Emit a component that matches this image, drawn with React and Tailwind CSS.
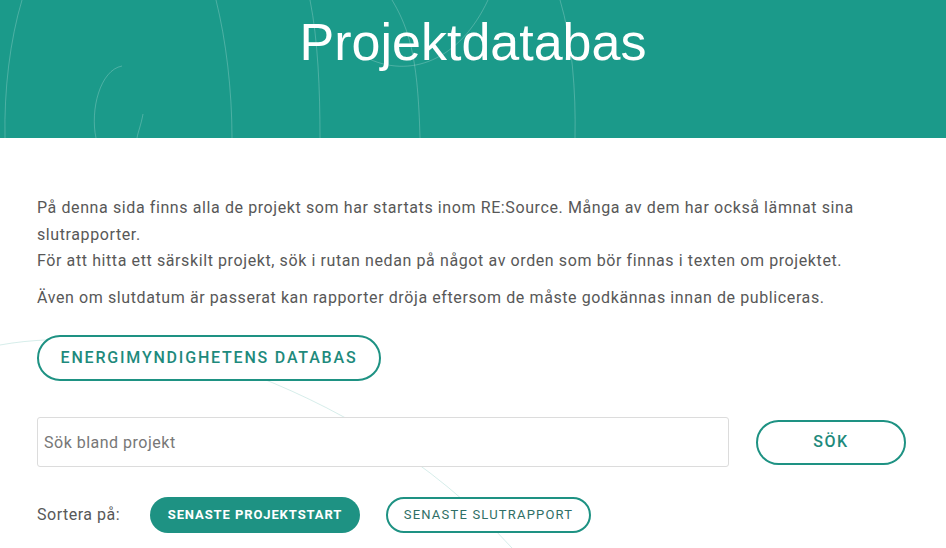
import React from "react";

function HeaderLines() {
  return (
    <svg className="absolute inset-0 w-full h-full pointer-events-none" viewBox="0 0 946 138" preserveAspectRatio="none" fill="none" stroke="#ffffff" strokeOpacity="0.22" strokeWidth="1">
      <path d="M22 0 C10 40 4 90 5 138" />
      <path d="M216 0 C226 40 232 90 232 138" />
      <path d="M310 0 C318 40 320 90 320 138" />
      <path d="M122 66 C100 70 90 110 96 138" />
      <path d="M143 114 C141 125 138 132 137 138" />
      <path d="M392 0 C410 30 418 60 420 138" />
      <path d="M365 57 C410 80 460 60 488 0" />
      <path d="M560 0 C572 40 576 90 575 138" />
    </svg>
  );
}

function BodyLines() {
  return (
    <svg className="absolute inset-0 w-full h-full pointer-events-none" viewBox="0 0 946 410" preserveAspectRatio="none" fill="none" stroke="#1b9a8a" strokeOpacity="0.18" strokeWidth="1">
      <path d="M0 207 C60 196 150 200 240 232 C330 265 430 320 512 410" />
    </svg>
  );
}

export default function App() {
  return (
    <div className="w-[946px] h-[548px] overflow-hidden bg-white" style={{ fontFamily: "Roboto, 'Liberation Sans', sans-serif" }}>
      <header className="relative h-[138px] bg-[#1b9a8a] flex justify-center">
        <HeaderLines />
        <h1 className="relative mt-[10px] text-[52px] leading-[64px] text-white" style={{ fontFamily: "'Liberation Sans', Arial, sans-serif" }}>
          Projektdatabas
        </h1>
      </header>

      <main className="relative px-[37px] pt-[57px] h-[410px]">
        <BodyLines />
        <div className="relative text-[16px] leading-[26.5px] text-[#585858] tracking-[0.6px]">
          <p>
            På denna sida finns alla de projekt som har startats inom RE:Source. Många av dem har också lämnat sina slutrapporter.
            <br />
            För att hitta ett särskilt projekt, sök i rutan nedan på något av orden som bör finnas i texten om projektet.
          </p>
          <p className="mt-[10px]">
            Även om slutdatum är passerat kan rapporter dröja eftersom de måste godkännas innan de publiceras.
          </p>
        </div>

        <button className="relative mt-[24px] h-[46px] w-[344px] rounded-full border-2 border-[#1e9283] bg-white text-[#1e8a7c] text-[16px] font-medium tracking-[1.8px]">
          ENERGIMYNDIGHETENS DATABAS
        </button>

        <div className="relative mt-[36px] flex items-center">
          <input
            placeholder="Sök bland projekt"
            className="w-[692px] h-[50px] rounded-[3px] border border-[#dcdcdc] bg-white px-[6px] text-[16px] tracking-[0.5px] text-[#555] placeholder-[#777] outline-none"
          />
          <button className="ml-[27px] h-[45px] w-[150px] rounded-full border-2 border-[#1e9283] bg-white text-[#1e8a7c] text-[16px] font-medium tracking-[1.5px]">
            SÖK
          </button>
        </div>

        <div className="relative mt-[30px] flex items-center">
          <span className="text-[16px] text-[#585858] tracking-[0.5px] w-[113px]">Sortera på:</span>
          <button className="h-[36px] w-[210px] rounded-full bg-[#1e9283] text-white text-[13px] font-bold tracking-[0.9px]">
            SENASTE PROJEKTSTART
          </button>
          <button className="ml-[26px] h-[36px] w-[205px] rounded-full border-2 border-[#1e9283] bg-white text-[#2f6f66] text-[13px] tracking-[1.2px]">
            SENASTE SLUTRAPPORT
          </button>
        </div>
      </main>
    </div>
  );
}
